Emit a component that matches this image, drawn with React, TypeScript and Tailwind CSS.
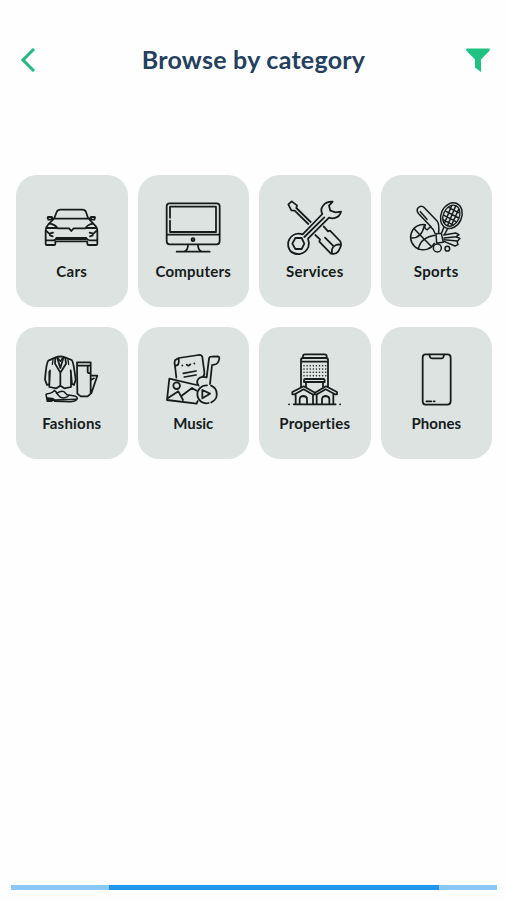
import type { ReactNode } from 'react';

type Category = { name: string; viewBox: string; tracking: string; art: ReactNode };

const car = (
  <>
    <path d="M74 84 81 66Q84 59 92 59H158Q166 59 169 66L175 84" />
    <path d="M66 86H184M75 84 56 103Q48 111 48 122V162Q48 165 52 165H73Q77 165 77 161V154H173V161Q173 165 177 165H199Q203 165 203 161V122Q203 111 193 103L175 84" />
    <path d="M68 89V83Q68 81 65 81H56Q53 81 54 84L56 89H66M182 89V83Q182 81 185 81H194Q197 81 196 84L194 89H184" />
    <path d="M59 101Q76 103 84 115H118L125 123L132 115H167Q174 103 191 101M51 114H84M167 114H200" />
    <path d="M50 123 58 130M200 123 192 130M70 128 60 131 61 136 69 139M180 128 190 131 189 136 181 139M49 151H71Q78 151 80 144H170Q173 151 180 151H202M81 147H169" />
  </>
);

const computer = (
  <>
    <path d="M60 40H201Q210 40 210 49V153Q210 163 201 163H60Q51 163 51 153V49Q51 40 60 40Z" />
    <path d="M61 83V50H199V126H61V92M52 134H209" />
    <circle cx="130" cy="149" r="4.5" fill="#68706e" />
    <path d="M115 165Q115 179 105 184M145 165Q145 179 155 184M81 185H180" />
  </>
);

const tools = (
  <>
    <path d="M123 96 80 54 82 46 66 34 56 43 65 61 75 62 116 102" />
    <path d="M214 65Q210 79 198 83Q189 87 178 83L115 146Q120 160 116 171Q109 188 91 192Q74 194 62 183Q53 171 56 155Q62 137 78 132Q89 129 99 133L158 72Q151 59 160 47Q170 34 189 35L178 47 182 62 198 67Z" />
    <path d="M77 144H96L104 161 96 177H77L68 161Z" />
    <path d="M164 82 104 141M162 109 175 124 181 122 211 153Q216 160 213 170L206 184Q197 195 183 190L149 155 151 148 137 135M187 190Q184 171 199 165Q207 162 214 165" />
    <path d="M166 143 190 167" />
  </>
);

const sports = (
  <>
    <g strokeWidth="4.5">
      <path d="M108 110 71 71Q63 62 69 54Q78 44 88 53L127 94Q133 102 131 127M76 65 96 88" />
      <path d="M118 160A38 38 0 1 1 91 104Q86 116 97 119L106 110Q117 118 120 130" />
      <path d="M57 116 110 170M47 144Q80 146 88 106M70 178Q76 143 120 136" />
      <ellipse cx="169" cy="77" rx="31" ry="40" transform="rotate(24 169 77)" />
      <path d="M146 113 140 128M158 116 149 132M123 131 139 130 145 157 125 159Z" />
      <path d="M146 135 182 129 192 134 184 140 147 144M184 141 195 145 188 153 147 149M186 154 189 164 180 168 147 154" />
      <circle cx="127" cy="174" r="12" />
      <circle cx="157" cy="176" r="7" />
    </g>
    <ellipse cx="169" cy="77" rx="24" ry="33" transform="rotate(24 169 77)" strokeWidth="4" />
    <path strokeWidth="4.5" d="M162 53 190 68M153 64 191 84M147 76 183 95M144 89 172 104M170 47 149 98M182 48 158 106M191 58 171 102" />
  </>
);

const clothes = (
  <>
    <path d="M78 52Q92 47 106 52L126 60Q132 66 138 119L133 135 127 132 123 91M78 52 56 62Q50 68 46 119L52 135 59 132 61 91M59 95V141L80 145 92 137 104 145 124 141V95" />
    <path d="M77 54 76 71 92 98V135M107 54 109 71 92 98M83 54 92 84 101 54" />
    <path d="M70 59 68 73M115 59 117 73M86 55 92 64 98 55" strokeWidth="4" />
    <path d="M142 67H183V161L174 169H153L143 161ZM144 77H182M174 79V96Q174 100 181 99M185 107 203 107 185 160M185 119 193 115" />
    <path d="M53 161Q68 160 74 151L83 159Q94 151 103 155L112 164 131 167Q143 169 143 175 141 184 123 185L75 184 72 179 67 183 53 184 49 164ZM53 174Q69 174 76 180L140 178M80 159 92 172Q107 177 116 168" strokeWidth="4.5" />
    <path d="M54 178H70L66 183H54Z" fill="currentColor" strokeWidth="4" />
  </>
);

const media = (
  <>
    <path d="M80 113 76 78Q73 69 76 61L87 54 147 45Q156 44 158 51L164 96Q166 104 160 110M76 76Q90 80 87 55" />
    <path d="M98 76V76.5M134 70V70.5M111 74Q117 80 122 73M101 100 139 93M104 111 139 105" />
    <path d="M141 135 59 116 52 180 141 191 144 183M54 175 86 154 100 180M96 167 127 144 141 152" />
    <circle cx="81" cy="137" r="10" />
    <path d="M171 112 178 56Q179 50 185 50L205 49Q209 49 209 54 207 73 194 74L187 75 181 132M171 112Q150 107 143 122 141 132 147 137" />
    <path d="M172 136A27 27 0 1 0 177 189M184 137A27 27 0 0 1 185 187M158 150V175L181 161Z" />
  </>
);

const buildings = (
  <>
    <path d="M100 54V49Q100 43 106 43H165Q171 43 171 49V54M94 141V60Q94 54 100 54H169Q175 54 175 60V141M96 65H173" />
    <path strokeWidth="4.5" strokeDasharray="0.1 9.2" d="M103 77H170M103 87H170M103 97H170M103 107H170" />
    <path d="M107 117H161Q165 117 165 121V126H103V121Q103 117 107 117ZM109 127V141M160 127V141" />
    <path d="M68 156V163H75L102 148 128 163H142L168 148 196 163H202V156L169 139 136 158 102 139ZM78 163V192M191 163V192M130 163V192M141 163V192M90 191V177Q91 168 102 168 112 169 112 177V191M157 191V177Q158 168 169 168 179 169 179 177V191M72 193H198M58 193H58.5M211 193H211.5" />
  </>
);

const phone = (
  <>
    <path d="M92 43H157Q167 43 167 53V184Q167 194 157 194H92Q83 194 83 184V53Q83 43 92 43Z" />
    <path d="M103 44 106 53Q107 55 111 55H140Q144 55 145 52L147 44" />
    <path d="M94 184H109M116 184H119" />
  </>
);

const categories: Category[] = [
  { name: 'Cars', viewBox: '37 24 180 180', tracking: 'tracking-[0.35px]', art: car },
  { name: 'Computers', viewBox: '40 24 180 180', tracking: 'tracking-[0.2px]', art: computer },
  { name: 'Services', viewBox: '46 24 180 180', tracking: 'tracking-[0.3px]', art: tools },
  { name: 'Sports', viewBox: '33 24 180 180', tracking: 'tracking-[0.3px]', art: sports },
  { name: 'Fashions', viewBox: '37 30 180 180', tracking: 'tracking-[0.2px]', art: clothes },
  { name: 'Music', viewBox: '40 30 180 180', tracking: 'tracking-[0px]', art: media },
  { name: 'Properties', viewBox: '46 30 180 180', tracking: 'tracking-[0.15px]', art: buildings },
  { name: 'Phones', viewBox: '33 30 180 180', tracking: 'tracking-[0.05px]', art: phone },
];

function CategoryCard({ category }: { category: Category }) {
  return (
    <button className="flex h-[132px] flex-col items-center rounded-[21px] bg-[#dce3e1] pt-[23.5px] text-[#161b1b]">
      <svg className="h-[60px] w-[60px] shrink-0 overflow-visible" viewBox={category.viewBox} fill="none" stroke="currentColor" strokeWidth="5.3" strokeLinecap="round" strokeLinejoin="round">
        {category.art}
      </svg>
      <span className={`mt-[2.9px] whitespace-nowrap text-[15px] leading-5 font-bold ${category.tracking}`}>{category.name}</span>
    </button>
  );
}

export default function App() {
  return (
    <div className="flex h-[900px] w-[507px] flex-col bg-[#fefefe] font-['Lato',sans-serif]">
      <header className="flex h-[120px] items-center justify-between pr-[17px] pl-5">
        <button aria-label="Back">
          <svg className="h-6 w-4" viewBox="0 0 16 24" fill="none" stroke="#20bb7f" strokeWidth="3">
            <path d="M14 1 3 12 14 23" />
          </svg>
        </button>
        <h1 className="mb-0.5 ml-[5px] whitespace-nowrap text-[25px] leading-8 font-bold tracking-[0.25px] text-[#24405f]">Browse by category</h1>
        <button aria-label="Filter">
          <svg className="h-6 w-6" viewBox="0 0 24 24" fill="#20c282">
            <path d="M.3.5H23.7V2.5L15 11.5V24L9 19.5V11.5L.3 2.5Z" />
          </svg>
        </button>
      </header>
      <main className="grid grid-cols-4 gap-x-[10px] gap-y-5 pr-[15px] pl-4 pt-[54.5px]">
        {categories.map((category) => <CategoryCard key={category.name} category={category} />)}
      </main>
      <footer className="mt-auto mr-[10px] mb-[10px] ml-[11px] flex h-[5px] bg-[#8bc7f7]">
        <div className="ml-[98px] w-[330px] bg-[#2196ec]" />
      </footer>
    </div>
  );
}
